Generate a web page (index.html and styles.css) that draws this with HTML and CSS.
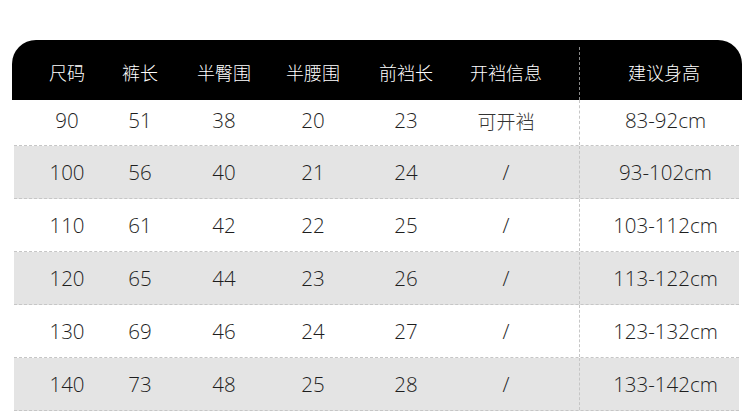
FILE: index.html
```html
<!DOCTYPE html>
<html lang="zh">
<head>
<meta charset="utf-8">
<title>尺码表</title>
<link rel="stylesheet" href="styles.css">
</head>
<body>
<div class="table">
  <div class="row head">
    <div class="cell">尺码</div>
    <div class="cell">裤长</div>
    <div class="cell">半臀围</div>
    <div class="cell">半腰围</div>
    <div class="cell">前裆长</div>
    <div class="cell c6">开裆信息</div>
    <div class="cell last">建议身高</div>
  </div>
  <div class="row body first">
    <div class="cell">90</div><div class="cell">51</div><div class="cell">38</div><div class="cell">20</div><div class="cell">23</div><div class="cell c6 cjk">可开裆</div><div class="cell last">83-92cm</div>
  </div>
  <div class="row body alt">
    <div class="cell">100</div><div class="cell">56</div><div class="cell">40</div><div class="cell">21</div><div class="cell">24</div><div class="cell c6">/</div><div class="cell last">93-102cm</div>
  </div>
  <div class="row body">
    <div class="cell">110</div><div class="cell">61</div><div class="cell">42</div><div class="cell">22</div><div class="cell">25</div><div class="cell c6">/</div><div class="cell last">103-112cm</div>
  </div>
  <div class="row body alt">
    <div class="cell">120</div><div class="cell">65</div><div class="cell">44</div><div class="cell">23</div><div class="cell">26</div><div class="cell c6">/</div><div class="cell last">113-122cm</div>
  </div>
  <div class="row body">
    <div class="cell">130</div><div class="cell">69</div><div class="cell">46</div><div class="cell">24</div><div class="cell">27</div><div class="cell c6">/</div><div class="cell last">123-132cm</div>
  </div>
  <div class="row body alt">
    <div class="cell">140</div><div class="cell">73</div><div class="cell">48</div><div class="cell">25</div><div class="cell">28</div><div class="cell c6">/</div><div class="cell last">133-142cm</div>
  </div>
</div>
</body>
</html>
```

FILE: styles.css
```css
html, body {
  margin: 0;
  padding: 0;
  background: #ffffff;
}
body {
  font-family: "Open Sans", "Noto Sans CJK SC", sans-serif;
  color: #333333;
}
.table {
  padding-top: 40px;
  padding-left: 12px;
  width: 730px;
}
.row {
  display: grid;
  grid-template-columns: 80px 66px 102px 76px 110px 118px 1fr;
  align-items: stretch;
}
.cell {
  display: flex;
  align-items: center;
  justify-content: center;
  white-space: nowrap;
}
.c6 {
  padding-right: 28px;
}
.head {
  background: #000000;
  color: #ffffff;
  height: 60px;
  border-radius: 24px 24px 0 0;
  padding-left: 15px;
  font-family: "Noto Sans CJK SC", sans-serif;
  font-size: 18px;
  font-weight: 300;
}
.head .cell {
  padding-top: 3px;
}
.head .last {
  border-left: 1px dashed #8a8a8a;
  padding-left: 6px;
  margin-top: 7px;
  padding-top: 0;
  padding-bottom: 4px;
}
.body {
  margin-left: 2px;
  margin-right: 3px;
  padding-left: 13px;
  height: 52px;
  border-bottom: 1px dashed #c6c6c6;
  font-size: 20.5px;
  font-weight: 300;
  color: #1e1e1e;
}
.body.first {
  height: 45px;
}
.body.first .cell {
  padding-bottom: 5px;
}
.body.alt {
  background: #e4e4e4;
}
.body .last {
  border-left: 1px dashed #c6c6c6;
  padding-left: 12px;
}
.cjk {
  font-family: "Noto Sans CJK SC", sans-serif;
  font-size: 19px;
  color: #333333;
}
```
